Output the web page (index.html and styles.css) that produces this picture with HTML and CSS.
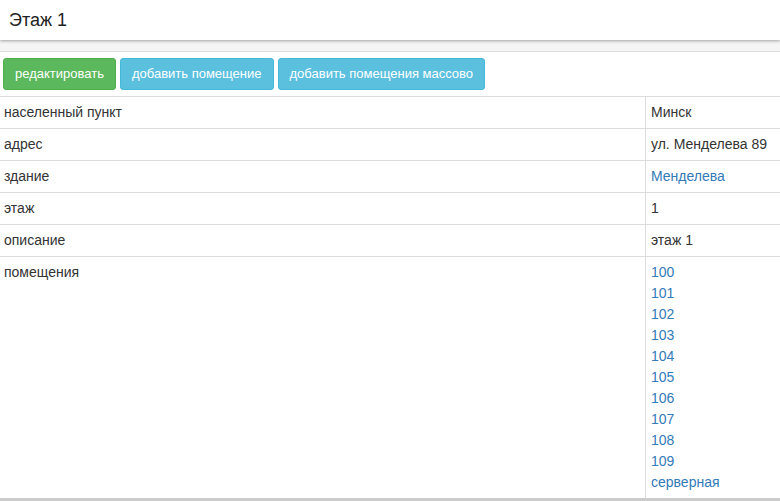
FILE: index.html
```html
<!DOCTYPE html>
<html lang="ru">
<head>
<meta charset="utf-8">
<title>Этаж 1</title>
<link rel="stylesheet" href="styles.css">
</head>
<body>
<header class="top">
  <h1 class="title">Этаж 1</h1>
</header>
<div class="spacer"></div>
<main class="panel">
  <div class="toolbar">
    <a class="btn btn-green" href="#">редактировать</a>
    <a class="btn btn-blue" href="#">добавить помещение</a>
    <a class="btn btn-blue" href="#">добавить помещения массово</a>
  </div>
  <table class="info">
    <tr><td class="k">населенный пункт</td><td class="v">Минск</td></tr>
    <tr><td class="k">адрес</td><td class="v">ул. Менделева 89</td></tr>
    <tr><td class="k">здание</td><td class="v"><a href="#">Менделева</a></td></tr>
    <tr><td class="k">этаж</td><td class="v">1</td></tr>
    <tr><td class="k">описание</td><td class="v">этаж 1</td></tr>
    <tr><td class="k">помещения</td><td class="v">
      <a class="room" href="#">100</a>
      <a class="room" href="#">101</a>
      <a class="room" href="#">102</a>
      <a class="room" href="#">103</a>
      <a class="room" href="#">104</a>
      <a class="room" href="#">105</a>
      <a class="room" href="#">106</a>
      <a class="room" href="#">107</a>
      <a class="room" href="#">108</a>
      <a class="room" href="#">109</a>
      <a class="room" href="#">серверная</a>
    </td></tr>
  </table>
</main>
</body>
</html>
```
FILE: styles.css
```css
html, body {
  margin: 0;
  padding: 0;
  background: #fff;
  font-family: "Liberation Sans", Arial, sans-serif;
  color: #333;
  overflow: hidden;
}
.top {
  height: 40px;
  display: flex;
  align-items: center;
  padding-left: 9px;
  background: #fff;
  box-shadow: 0 1px 3px rgba(0,0,0,0.35);
  position: relative;
  z-index: 1;
}
.title {
  margin: 0;
  font-size: 18px;
  font-weight: normal;
  color: #222;
}
.spacer {
  height: 11px;
  background: #f5f5f5;
  border-bottom: 1px solid #ddd;
}
.panel {
  background: #fff;
  border-bottom: 3px solid #ccc;
}
.toolbar {
  display: flex;
  gap: 4px;
  padding: 6px 3px 6px 3px;
  border-bottom: 1px solid #ddd;
}
.btn {
  display: inline-block;
  height: 32px;
  box-sizing: border-box;
  padding: 0 11px;
  line-height: 30px;
  font-size: 13px;
  color: #fff;
  text-decoration: none;
  border-radius: 3px;
  border: 1px solid transparent;
}
.btn-green { background: #5cb85c; border-color: #4cae4c; }
.btn-blue { background: #5bc0de; border-color: #46b8da; }
.info {
  width: 100%;
  border-collapse: collapse;
  font-size: 14px;
}
.info td {
  padding: 5px 4px 5px 4px;
  line-height: 21px;
  vertical-align: top;
  border-bottom: 1px solid #ddd;
}
.info tr:last-child td { border-bottom: none; }
.info td.k { width: 637px; }
.info td.v {
  border-left: 1px solid #ddd;
  padding-left: 5px;
  white-space: nowrap;
}
.info a { color: #337ab7; text-decoration: none; }
.room { display: block; }
```
